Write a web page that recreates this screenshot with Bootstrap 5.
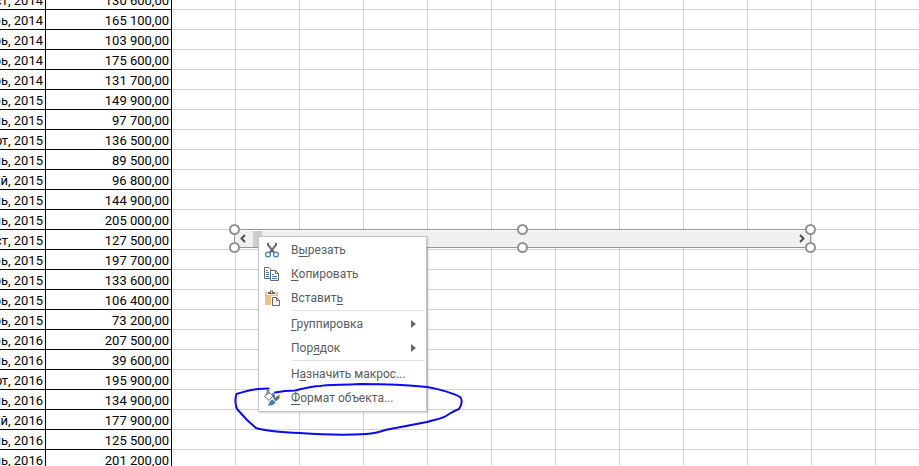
<!DOCTYPE html>
<html lang="ru">
<head>
<meta charset="utf-8">
<meta name="viewport" content="width=device-width, initial-scale=1">
<title>Лист</title>
<link href="https://cdn.jsdelivr.net/npm/bootstrap@5.3.0/dist/css/bootstrap.min.css" rel="stylesheet">
<style>
body{font-family:Roboto,"Noto Sans",sans-serif;font-size:13px;line-height:18px;color:#000;background:#fff}
.sheet{height:100vh}
.grid{table-layout:fixed;border-collapse:separate;border-spacing:0;width:940px;min-width:100%;margin-top:-10px}
.grid td{height:20px;padding:0;border-right:1px solid #d4d4d4;border-bottom:1px solid #d4d4d4}
.grid td.val{border-color:#000}
.val{white-space:nowrap;text-align:right}
.val>div{height:19px;padding-top:2px;padding-right:2px}
.c-date{width:46px}.c-sum{width:126px}
.scroller{left:234px;top:229px;width:577px;height:19px;background:#f0f0f0;border:1px solid #959595;box-shadow:inset 0 1px #fff}
.scroller button{width:16px;padding:0;border:0;background:none;line-height:0}
.thumb{width:9px;margin:1px 0 0 2px;background:#cdcdcd}
.frame{inset:-6px;pointer-events:none}
.handle{width:11px;height:11px;border:2px solid #919191;background:#fff;border-radius:50%}
.ctx{left:258px;top:236px;width:169px;padding:1px;background:#fff;border:1px solid #c6c6c6;box-shadow:1px 1px 2px rgba(0,0,0,.2)}
.ctx button{height:24px;padding:0 9px 0 4px;border:0;background:none;color:#5c5c5c;text-align:left;font-size:12px;line-height:18px}
.ctx button:hover{background:#e6f2ea}
.ctx svg.ico{width:16px;height:16px;margin-right:11px;flex:none}
.noico{padding-left:31px!important}
.ctx u{text-underline-offset:2px;text-decoration-thickness:1px}
.rule{height:2px;margin-left:32px;border-bottom:1px solid #fff;background:#e1e1e1}
.ink{left:230px;top:380px;pointer-events:none}
</style>
<script src="https://cdn.jsdelivr.net/npm/bootstrap@5.3.0/dist/js/bootstrap.bundle.min.js"></script>
</head>
<body>
<main class="sheet position-relative overflow-hidden">
<table class="grid">
<colgroup><col class="c-date"><col class="c-sum"><col span="12"></colgroup>
<tbody id="rows"></tbody>
</table>

<div class="scroller position-absolute d-flex">
<button type="button" aria-label="Назад"><svg width="8" height="9" viewBox="0 0 8 9" fill="none" stroke="#505050" stroke-width="2"><path d="M6 1 2.5 4.5 6 8"/></svg></button>
<div class="thumb"></div>
<button type="button" class="ms-auto" aria-label="Вперёд"><svg width="8" height="9" viewBox="0 0 8 9" fill="none" stroke="#505050" stroke-width="2"><path d="M2 1 5.5 4.5 2 8"/></svg></button>
<div class="frame position-absolute d-flex flex-column justify-content-between">
<div class="d-flex justify-content-between"><span class="handle"></span><span class="handle"></span><span class="handle"></span></div>
<div class="d-flex justify-content-between"><span class="handle"></span><span class="handle"></span><span class="handle"></span></div>
</div>
</div>

<div class="ctx position-absolute d-flex flex-column">
<button type="button" class="d-flex align-items-center"><svg class="ico" viewBox="0 0 16 16" fill="none"><path d="M4 1v2l6.500 8M12 1v2l-6.500 8" stroke="#6a6a6a" stroke-width="2"/><circle cx="4" cy="12.500" r="2.400" stroke="#4a7ebb" stroke-width="1.200" fill="#fff"/><circle cx="12" cy="12.500" r="2.400" stroke="#4a7ebb" stroke-width="1.200" fill="#fff"/></svg><span>В<u>ы</u>резать</span></button>
<button type="button" class="d-flex align-items-center"><svg class="ico" viewBox="0 0 16 16" fill="none"><path d="M6 12.500H.5v-11H5l2 2V4" stroke="#6a6a6a"/><path d="M2 4.500h2M2 6.500h3M2 8.500h3M2 10.500h3" stroke="#4a7ebb"/><path d="M6.500 4.500h5l3 3v7h-8z" fill="#fff" stroke="#6a6a6a"/><path d="M11.500 4.500v3h3" stroke="#6a6a6a"/><path d="M8 8.500h2M8 10.500h5M8 12.500h5" stroke="#4a7ebb"/></svg><span><u>К</u>опировать</span></button>
<button type="button" class="d-flex align-items-center"><svg class="ico" viewBox="0 0 16 16" fill="none"><path d="M1 2h13v13H1z" fill="#eac282"/><path d="M3.500 1.500h8V5h-8z" fill="#fff"/><path d="M4 2h2V.500h3V2h2v2H4z" fill="#6a6a6a"/><path d="M7 1.500h1V3H7z" fill="#fff"/><path d="M7 6h6l3 3v7H7z" fill="#fff"/><path d="M8.500 7.500h4l3 3v5h-7zM12.500 7.500v3h3" stroke="#6a6a6a"/></svg><span>Вставит<u>ь</u></span></button>
<div class="rule"></div>
<button type="button" class="noico d-flex align-items-center justify-content-between"><span><u>Г</u>руппировка</span><svg width="5" height="8" viewBox="0 0 5 8"><path d="M0 0 5 4 0 8z" fill="#666"/></svg></button>
<button type="button" class="noico d-flex align-items-center justify-content-between"><span>Пор<u>я</u>док</span><svg width="5" height="8" viewBox="0 0 5 8"><path d="M0 0 5 4 0 8z" fill="#666"/></svg></button>
<div class="rule"></div>
<button type="button" class="noico"><span>Н<u>а</u>значить макрос...</span></button>
<button type="button" class="d-flex align-items-center"><svg class="ico" viewBox="0 0 16 16" fill="none"><path d="M.700 6.500 4.500 2 9 6 5 10.500z" fill="#fff" stroke="#6a6a6a"/><path d="M3 5V.500h2V4" stroke="#6a6a6a"/><path d="M8 3c3 0 3 2 3 4.500L9.500 9 8.500 6z" fill="#4a7ebb"/><path d="M15.500 4.500V8L12 11.500 9.500 9z" fill="#6a6a6a"/><path d="M8.500 9.500 11.500 12c-1 3-4 4-8 3.500 2-1 1.500-5 5-6z" fill="#4a7ebb"/></svg><span><u>Ф</u>ормат объекта...</span></button>
</div>

<svg class="ink position-absolute" width="236" height="60" viewBox="230 380 236 60" fill="none" stroke="#0a0af5" stroke-width="2" stroke-linecap="round" stroke-linejoin="round" aria-hidden="true"><path d="M268.500 388.500 258 389C250 389.500 247 391 236.500 394 235 398 235 405 237 409L247 420 256 428C266 431 285 432.500 300 433 320 434.500 350 435 366 434 378 433 382 431 385 430L427 422C438 419 443 418 446 416 451 413 453 411 459 409 462 404 463 400 460 397 455 394 440 389 427 387 400 384 380 384 360 384 340 385 325 385 320 386 310 386.500 302 389 295 390.500L285 391 275 392.500"/></svg>
</main>
<script>
const data=[["Август, 2014","130 600,00"],["Сентябрь, 2014","165 100,00"],["Октябрь, 2014","103 900,00"],["Ноябрь, 2014","175 600,00"],["Декабрь, 2014","131 700,00"],["Январь, 2015","149 900,00"],["Февраль, 2015","97 700,00"],["Март, 2015","136 500,00"],["Апрель, 2015","89 500,00"],["Май, 2015","96 800,00"],["Июнь, 2015","144 900,00"],["Июль, 2015","205 000,00"],["Август, 2015","127 500,00"],["Сентябрь, 2015","197 700,00"],["Октябрь, 2015","133 600,00"],["Ноябрь, 2015","106 400,00"],["Декабрь, 2015","73 200,00"],["Январь, 2016","207 500,00"],["Февраль, 2016","39 600,00"],["Март, 2016","195 900,00"],["Апрель, 2016","134 900,00"],["Май, 2016","177 900,00"],["Июнь, 2016","125 500,00"],["Июль, 2016","201 200,00"]];
document.getElementById("rows").innerHTML=data.map(([d,s])=>`<tr><td class="val"><div class="d-flex justify-content-end overflow-hidden">${d}</div></td><td class="val"><div>${s}</div></td>${"<td></td>".repeat(12)}</tr>`).join("");
</script>
</body>
</html>
